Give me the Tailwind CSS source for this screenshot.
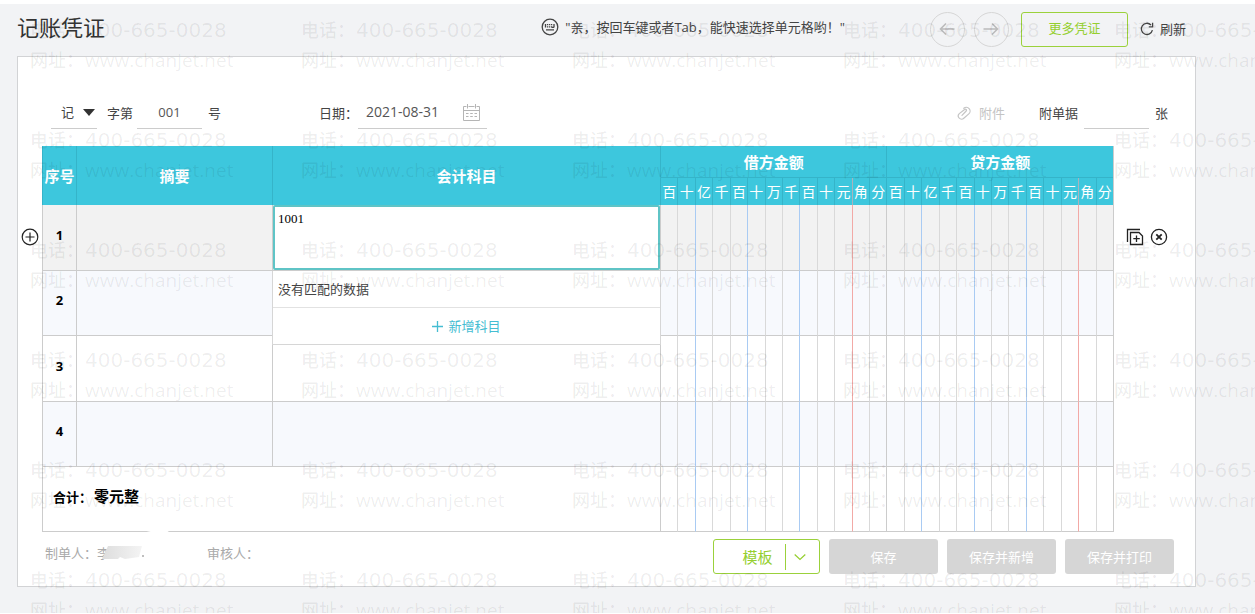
<!DOCTYPE html>
<html lang="zh-CN">
<head>
  <meta charset="UTF-8" />
  <meta name="viewport" content="width=device-width, initial-scale=1.0" />
  <title>记账凭证</title>
  <script src="https://cdn.jsdelivr.net/npm/@tailwindcss/browser@4"></script>
  <style>
    body {
      font-family: 'Open Sans', 'Noto Sans CJK SC', sans-serif;
    }
  </style>
</head>
<body class="bg-white py-1 text-[13px] leading-5 text-[#444]">
  <div class="relative overflow-hidden bg-[#f2f3f5] pb-[26px] pl-[17px] pr-[59px]">

    <!-- Page header -->
    <header class="flex h-[52px] items-center pb-0.5 pr-[10px]">
      <h1 class="pb-1 text-[22px] leading-8 text-[#333]">记账凭证</h1>
      <p class="ml-auto mr-[85px] flex items-center gap-1.5 whitespace-nowrap pb-1">
        <svg class="size-[18px]" viewBox="0 0 18 18" fill="none" stroke="#444" stroke-width="1.3">
          <circle cx="9" cy="9" r="7.8" />
          <path d="M4.5 6v3.400M6.600 6v1.200M8.600 6v1.200M10.600 6v1.200M13 6v3.400M6.600 8.300v1.100M8.600 8.300v1.100M10.600 8.300v1.100M10.600 9.400H13M5 11.800h8" />
        </svg>
        "亲，按回车键或者Tab，能快速选择单元格哟！"
      </p>
      <div class="flex items-center gap-[9px]">
        <button type="button" aria-label="上一张" class="flex size-[35px] items-center justify-center rounded-full border border-[#d6d6d6]">
          <svg class="size-4" viewBox="0 0 16 16" fill="none" stroke="#bbb" stroke-width="1.6"><path d="M15.5 8H1.5M7 2.5 1.5 8 7 13.5" /></svg>
        </button>
        <button type="button" aria-label="下一张" class="flex size-[35px] items-center justify-center rounded-full border border-[#d6d6d6]">
          <svg class="size-4" viewBox="0 0 16 16" fill="none" stroke="#bbb" stroke-width="1.6"><path d="M.5 8h14M9 2.5 14.5 8 9 13.5" /></svg>
        </button>
      </div>
      <button type="button" class="ml-3 h-[35px] w-[107px] rounded-[3px] border border-[#9bd13b] pb-0.5 text-[#95cf2f]">更多凭证</button>
      <button type="button" class="ml-3 flex items-center gap-1.5">
        <svg class="size-[14px]" viewBox="0 0 14 14" fill="none" stroke="#444" stroke-width="1.3">
          <path d="M12.4 8.2A5.6 5.6 0 1 1 11 3" /><path d="M12.6.8v4H8.8" />
        </svg>
        刷新
      </button>
    </header>

    <main class="border border-[#d2d3d5] bg-white">
      <!-- Voucher number, date, attachments -->
      <div class="flex h-[89px] items-center pb-0.5 pl-[33px] pr-[27px] pt-6">
        <div class="relative">
          <select id="word" aria-label="凭证字" class="h-8 w-[46px] appearance-none border-b border-[#ccc] pl-[10px] outline-none">
            <option>记</option>
            <option>收</option>
            <option>付</option>
          </select>
          <svg class="pointer-events-none absolute right-0.5 top-3 h-[7px] w-3" viewBox="0 0 12 7" fill="#333"><path d="M0 0h12L6 7z" /></svg>
        </div>
        <label for="no" class="ml-[10px]">字第</label>
        <input id="no" value="001" class="ml-1 h-8 w-[65px] border-b border-[#ccc] text-center text-[#555] outline-none" />
        <span class="ml-1.5">号</span>

        <label for="date" class="ml-[98px]">日期：</label>
        <div class="flex h-8 items-center border-b border-[#ccc] pr-[7px]">
          <input id="date" value="2021-08-31" class="ml-2 w-[97px] text-sm text-[#555] outline-none" />
          <svg class="size-[17px]" viewBox="0 0 17 17" fill="none" stroke="#b5b5b5">
            <path d="M.5 16.500V2.500h3M5.500 2.500h6M13.500 2.500h3v14H.5M.5 6.500h16M4.500 0v4.500M12.500 0v4.500" />
            <path d="M3 9.500h2.500M7.200 9.500h2.600M11.500 9.500H14M3 12.500h2.500M7.200 12.500h2.600M11.500 12.500H14" />
          </svg>
        </div>

        <button type="button" class="ml-auto flex items-center gap-2 text-[#c4c4c4]">
          <svg class="size-[14px]" viewBox="0 0 14 14" fill="none" stroke="#c4c4c4" stroke-width="1.200" stroke-linecap="round">
            <path d="M5 9.300 9.200 5a1.100 1.100 0 0 0-1.600-1.500L2.300 7.600a3.200 3.200 0 0 0 4.500 4.600l5-4.300a3.700 3.700 0 0 0-5-5.600" />
          </svg>
          附件
        </button>
        <label for="bills" class="ml-[34px]">附单据</label>
        <input id="bills" class="ml-1.5 h-8 w-[65px] border-b border-[#ccc] outline-none" />
        <span class="ml-1.5">张</span>
      </div>

      <!-- Entry grid, with row actions in the gutters -->
      <div class="flex items-start">
        <div class="w-6 shrink-0 pl-[3px] pt-[82px]">
          <button type="button" aria-label="插入行" class="block">
            <svg class="size-[18px]" viewBox="0 0 18 18" fill="none" stroke="#222" stroke-width="1.200"><circle cx="9" cy="9" r="7.800" /><path d="M9 4.500v9M4.500 9h9" /></svg>
          </button>
        </div>

        <table class="w-full table-fixed border-separate border-spacing-0 border-r border-[#ccc]">
          <colgroup>
            <col class="w-[34px]" />
            <col class="w-[196px]" />
            <col class="w-[388px]" />
            <col span="26" />
          </colgroup>
          <thead class="bg-[#3dc7dd] text-white">
            <tr class="h-8 text-[15px] leading-5">
              <th rowspan="2" class="whitespace-nowrap border-l border-[#35b4c9]">序号</th>
              <th rowspan="2" class="border-l border-[#35b4c9]">摘要</th>
              <th rowspan="2" class="border-l border-[#35b4c9]">会计科目</th>
              <th colspan="13" class="border-b border-l border-[#35b4c9]">借方金额</th>
              <th colspan="13" class="border-b border-l border-[#35b4c9]">贷方金额</th>
            </tr>
            <tr id="units" class="h-[27px] text-sm leading-5"></tr>
          </thead>
          <tbody id="rows">
            <tr class="h-[66px] bg-[#f2f2f2]">
              <td class="border-b border-l border-[#ccc] pb-1.5 text-center font-bold text-black">1</td>
              <td class="border-b border-l border-[#ccc]"></td>
              <td class="relative border-b border-l border-[#ccc] p-0">
                <textarea aria-label="会计科目" class="block h-[65px] w-full resize-none rounded-[2px] border-2 border-[#5fc4c6] bg-white px-[3px] py-1 font-['Liberation_Serif'] text-[13px] leading-4 text-black outline-none">1001</textarea>
                <div class="absolute -left-px -right-px top-[66px] z-10 border-x border-b border-[#d6d6d6] bg-white">
                  <p class="flex h-[37px] items-center border-b border-[#e2e2e2] px-[5px]">没有匹配的数据</p>
                  <button type="button" class="flex h-9 w-full items-center justify-center gap-[5px] text-[#45bdd2]">
                    <svg class="size-[11px]" viewBox="0 0 11 11" stroke="#45bdd2" stroke-width="1.300"><path d="M5.500 0v11M0 5.500h11" /></svg>
                    新增科目
                  </button>
                </div>
              </td>
            </tr>
            <tr class="h-[65px] bg-[#f7f9fd]">
              <td class="border-b border-l border-[#ccc] pb-1.5 text-center font-bold text-black">2</td>
              <td class="border-b border-l border-[#ccc]"></td>
              <td class="border-b border-l border-[#ccc]"></td>
            </tr>
            <tr class="h-[66px]">
              <td class="border-b border-l border-[#ccc] pb-1.5 text-center font-bold text-black">3</td>
              <td class="border-b border-l border-[#ccc]"></td>
              <td class="border-b border-l border-[#ccc]"></td>
            </tr>
            <tr class="h-[65px] bg-[#f7f9fd]">
              <td class="border-b border-l border-[#ccc] pb-1.5 text-center font-bold text-black">4</td>
              <td class="border-b border-l border-[#ccc]"></td>
              <td class="border-b border-l border-[#ccc]"></td>
            </tr>
            <tr class="h-[65px]">
              <td colspan="3" class="border-b border-l border-[#ccc] pb-1.5 pl-[10px] font-bold text-black">
                合计：<span class="ml-0.5 text-[15px]">零元整</span>
              </td>
            </tr>
          </tbody>
        </table>

        <div class="flex w-[81px] shrink-0 gap-1.5 pl-3 pt-[82px]">
          <button type="button" aria-label="复制行">
            <svg class="size-[18px]" viewBox="0 0 18 18" fill="none" stroke="#222" stroke-width="1.300">
              <path d="M1.500 14V1.500H14" /><path d="M4.500 4.500h8.500l3.500 3.500v8.500h-12zM10.500 7.500v6.500M7.300 10.700h6.500" />
            </svg>
          </button>
          <button type="button" aria-label="删除行">
            <svg class="size-[18px]" viewBox="0 0 18 18" fill="none" stroke="#222" stroke-width="1.300"><circle cx="9" cy="9" r="7.600" /><path stroke-width="1.800" d="m6.300 6.300 5.400 5.400M11.700 6.300l-5.400 5.400" /></svg>
          </button>
        </div>
      </div>

      <!-- Signatures and actions -->
      <footer class="flex h-[54px] items-start pl-[27px] pr-[21px] pt-[7px]">
        <p class="relative mt-1 w-[162px] text-[#aaa]">
          制单人：李
          <svg class="absolute -top-4 left-[50px] h-9 w-[76px]" viewBox="0 0 76 36">
            <defs>
              <linearGradient id="smudge"><stop offset="0" stop-color="#ddd" /><stop offset="1" stop-color="#f4f4f4" /></linearGradient>
            </defs>
            <path fill="#fff" d="M10 15 64 2l10-2v4L60 14 50 32H14z" />
            <path fill="url(#smudge)" d="M13 19h34l-3 11-14 2-5-2-2 2H7z" />
            <circle cx="48" cy="29" r="1" fill="#aaa" />
          </svg>
        </p>
        <p class="mt-1 text-[#aaa]">审核人：</p>
        <div class="ml-auto flex gap-[9px] text-white">
          <div class="flex h-[35px] w-[107px] items-center rounded-[3px] border border-[#9bd13b] text-[#95cf2f]">
            <button type="button" class="flex-1 pl-4 text-[15px]">模板</button>
            <button type="button" aria-label="更多模板" class="flex h-[26px] w-[34px] items-center border-l border-[#9bd13b] pl-2">
              <svg class="h-2 w-3" viewBox="0 0 12 8" fill="none" stroke="#95cf2f" stroke-width="1.200"><path d="m.7 1.500 5.300 5 5.300-5" /></svg>
            </button>
          </div>
          <button type="button" class="h-[35px] w-[109px] rounded-[3px] bg-[#d6d6d6]">保存</button>
          <button type="button" class="h-[35px] w-[109px] rounded-[3px] bg-[#d6d6d6]">保存并新增</button>
          <button type="button" class="h-[35px] w-[109px] rounded-[3px] bg-[#d6d6d6]">保存并打印</button>
        </div>
      </footer>
    </main>

    <!-- Watermark laid over the whole page -->
    <div id="watermark" aria-hidden="true" class="pointer-events-none absolute left-[30px] top-[11px] z-20 grid w-max grid-cols-[repeat(5,271px)] font-medium text-black/7"></div>
  </div>

  <template id="mark">
    <div class="h-[110px] text-[19px] leading-[30px]">
      <p class="flex"><span class="w-[55px] text-lg leading-[30px]">电话：</span><span class="font-['DejaVu_Sans'] text-xl leading-[30px]">400-665-0028</span></p>
      <p class="flex"><span class="w-[55px] text-lg leading-[30px]">网址：</span>www.chanjet.net</p>
    </div>
  </template>

  <script>
    const units = '百十亿千百十万千百十元角分';

    // left rule of each digit column: thousands separators blue, decimal point red
    function lineColor(i) {
      if (i === 0) return 'border-l-[#ccc]';
      if (i === 2 || i === 5 || i === 8) return 'border-l-[#a9cbf3]';
      if (i === 11) return 'border-l-[#f2a9a6]';
      return 'border-l-[#d9d9d9]';
    }

    const unitRow = document.getElementById('units');
    for (let side = 0; side < 2; side++) {
      [...units].forEach((u, i) => {
        const th = document.createElement('th');
        th.className = 'border-l p-0 font-normal ' + (i === 11 ? 'border-[#a9b3bd]' : 'border-[#35b4c9]');
        th.textContent = u;
        unitRow.appendChild(th);
      });
    }

    document.querySelectorAll('#rows tr').forEach((tr) => {
      for (let n = 0; n < 26; n++) {
        const td = document.createElement('td');
        td.className = 'border-b border-l border-b-[#ccc] ' + lineColor(n % 13);
        tr.appendChild(td);
      }
    });

    const mark = document.getElementById('mark');
    for (let n = 0; n < 30; n++) {
      document.getElementById('watermark').appendChild(mark.content.cloneNode(true));
    }
  </script>
</body>
</html>
